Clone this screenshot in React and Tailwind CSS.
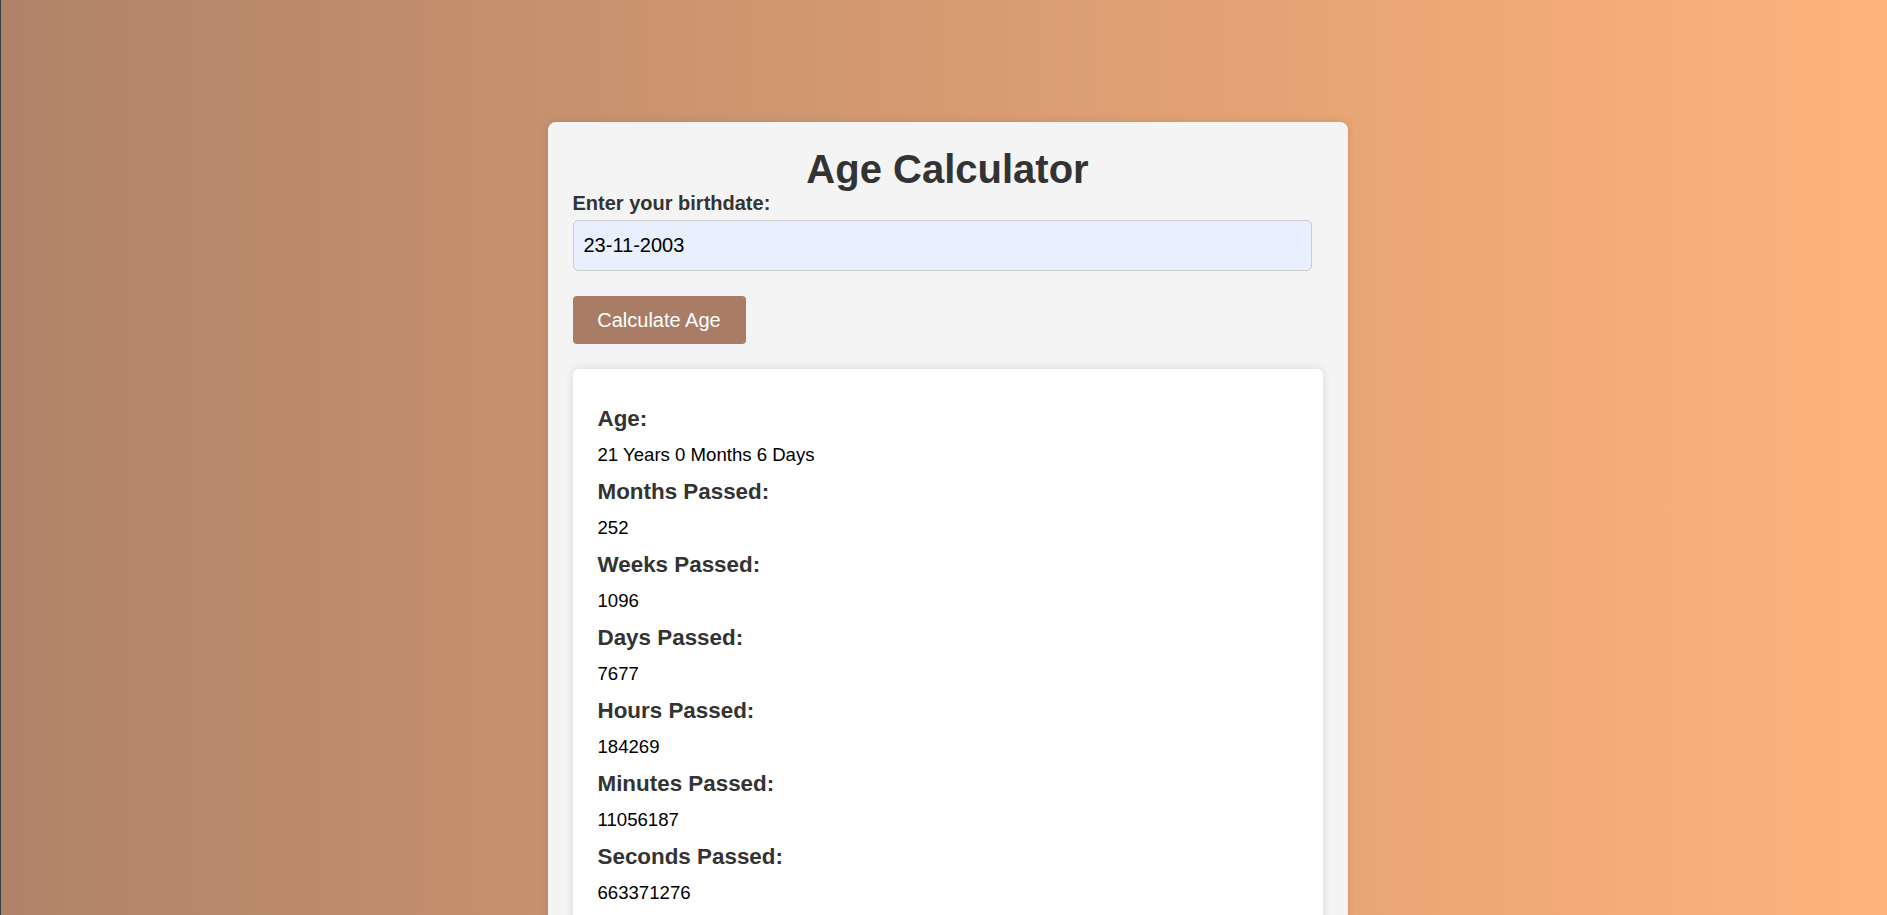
import React, { useState } from 'react';

const results = [
  { label: 'Age:', value: '21 Years 0 Months 6 Days' },
  { label: 'Months Passed:', value: '252' },
  { label: 'Weeks Passed:', value: '1096' },
  { label: 'Days Passed:', value: '7677' },
  { label: 'Hours Passed:', value: '184269' },
  { label: 'Minutes Passed:', value: '11056187' },
  { label: 'Seconds Passed:', value: '663371276' },
];

const App = () => {
  const [birthdate, setBirthdate] = useState('23-11-2003');

  return (
    <div
      className="min-h-screen w-full border-l border-[#3c4043] bg-gradient-to-r from-[#b08368] to-[#ffb37b] flex justify-center pt-[122px] pl-[7px]"
      style={{ fontFamily: '"Liberation Sans", Arial, sans-serif' }}
    >
      <div className="w-[800px] self-start rounded-lg bg-[#f4f4f4] px-[25px] pt-[24px] pb-6 shadow-[0_0_10px_rgba(0,0,0,0.1)]">
        <h1 className="text-center text-[40px] leading-[46px] font-bold text-[#333]">Age Calculator</h1>

        <label className="block text-[20px] leading-[23px] font-bold text-[#333]">
          Enter your birthdate:
        </label>
        <input
          type="text"
          value={birthdate}
          onChange={(e) => setBirthdate(e.target.value)}
          className="mt-[5px] block w-[739px] h-[51px] rounded-[5px] border border-[#cccccc] bg-[#e8f0fe] px-[10px] text-[20px] text-black outline-none"
        />

        <button className="mt-[25px] block w-[173px] h-[48px] rounded-[4px] bg-[#a97c66] text-[20px] text-white">
          Calculate Age
        </button>

        <div className="mt-[25px] rounded-md bg-white px-[25px] pt-[37px] pb-4 shadow-[0_0_10px_rgba(0,0,0,0.12)]">
          {results.map((item) => (
            <div key={item.label}>
              <h3 className="text-[22.4px] leading-[25px] font-bold text-[#333] mb-[13px]">{item.label}</h3>
              <p className="text-[18.6px] leading-[21px] text-black mb-[14px]">{item.value}</p>
            </div>
          ))}
        </div>
      </div>
    </div>
  );
};

export default App;
